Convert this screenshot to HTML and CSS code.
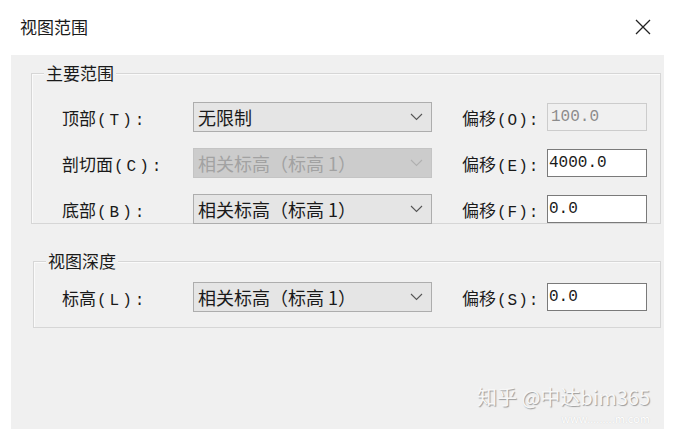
FILE: index.html
```html
<!DOCTYPE html>
<html lang="zh">
  <head>
    <meta charset="utf-8" />
    <meta name="viewport" content="width=device-width, initial-scale=1.0" />
    <title>视图范围</title>
    <link rel="stylesheet" href="styles.css">
  </head>

  <body>
    <header class="titlebar">
      <h1>视图范围</h1>
      <svg class="close" width="16" height="16" viewBox="0 0 16 16">
        <path d="M1 1 L15 15 M15 1 L1 15" stroke="#222" stroke-width="1.3" fill="none" />
      </svg>
    </header>

    <main class="panel">
      <section class="group main-range">
        <span class="legend">主要范围</span>
        <div class="rows">
          <label class="lbl">顶部<span class="lat">(T):</span></label>
          <div class="select">无限制<svg class="chev" width="13" height="8" viewBox="0 0 13 8"><polyline points="1,1 6.5,6.5 12,1" /></svg></div>
          <label class="lbl offset">偏移<span class="lat">(O):</span></label>
          <div class="input off">100.0</div>

          <label class="lbl">剖切面<span class="lat">(C):</span></label>
          <div class="select off">相关标高（标高 1）<svg class="chev" width="13" height="8" viewBox="0 0 13 8"><polyline points="1,1 6.5,6.5 12,1" /></svg></div>
          <label class="lbl offset">偏移<span class="lat">(E):</span></label>
          <div class="input">4000.0</div>

          <label class="lbl">底部<span class="lat">(B):</span></label>
          <div class="select">相关标高（标高 1）<svg class="chev" width="13" height="8" viewBox="0 0 13 8"><polyline points="1,1 6.5,6.5 12,1" /></svg></div>
          <label class="lbl offset">偏移<span class="lat">(F):</span></label>
          <div class="input">0.0</div>
        </div>
      </section>

      <section class="group depth">
        <span class="legend">视图深度</span>
        <div class="rows">
          <label class="lbl">标高<span class="lat">(L):</span></label>
          <div class="select">相关标高（标高 1）<svg class="chev" width="13" height="8" viewBox="0 0 13 8"><polyline points="1,1 6.5,6.5 12,1" /></svg></div>
          <label class="lbl offset">偏移<span class="lat">(S):</span></label>
          <div class="input">0.0</div>
        </div>
      </section>

      <div class="watermark">
        <span class="wm-main">知乎 @中达bim365</span>
        <span class="wm-sub">www.........m.com</span>
      </div>
    </main>
  </body>
</html>
```

FILE: styles.css
```css
body {
  margin: 0;
  background: #fff;
  font-family: "Noto Sans CJK SC", "Noto Sans", sans-serif;
  color: #1a1a1a;
}

.titlebar {
  height: 55px;
  display: flex;
  align-items: center;
  justify-content: space-between;
  padding: 0 32px 0 20px;
}

.titlebar h1 {
  margin: 0;
  font-size: 17px;
  font-weight: normal;
  margin-top: -2px;
}

.close {
  margin-top: -2px;
}

.panel {
  position: relative;
  margin: 0 19px 0 11px;
  height: 374px;
  background: #f0f0f0;
  padding: 18px 3px 0 20px;
  box-sizing: border-box;
}

.group {
  position: relative;
  border: 1px solid #d6d6d6;
  box-shadow: inset 1px 1px #fafafa;
}

.legend {
  position: absolute;
  top: -13px;
  left: 12px;
  padding: 0 2px;
  background: #f0f0f0;
  font-size: 17px;
  line-height: 24px;
}

.main-range {
  height: 151px;
  padding: 28px 0 0 30px;
  box-sizing: border-box;
}

.depth {
  margin: 37px 0 0 2px;
  height: 67px;
  padding: 20px 0 0 28px;
  box-sizing: border-box;
}

.rows {
  display: grid;
  grid-template-columns: 131px 239px 115px 100px;
  grid-auto-rows: 30px;
  row-gap: 16px;
  align-items: center;
}

.lbl {
  font-size: 17px;
  white-space: nowrap;
}

.lat {
  font-family: "Liberation Mono", monospace;
  font-size: 16px;
  letter-spacing: 3px;
  margin-left: 1px;
}

.lbl.offset {
  padding-left: 30px;
}

.lbl.offset .lat {
  letter-spacing: 1px;
}

.select {
  height: 30px;
  box-sizing: border-box;
  border: 1px solid #adadad;
  background: #e5e5e5;
  font-size: 18px;
  line-height: 28px;
  padding-left: 4px;
  display: flex;
  align-items: center;
  justify-content: space-between;
  white-space: nowrap;
}

.select.off {
  background: #cccccc;
  border-color: #c4c4c4;
  color: #a2a2a2;
}

.chev {
  margin-right: 8px;
  fill: none;
  stroke: #555;
  stroke-width: 1.1;
}

.select.off .chev {
  stroke: #b0b0b0;
}

.input {
  height: 28px;
  box-sizing: border-box;
  border: 1px solid #7a7a7a;
  background: #fff;
  font-family: "Liberation Mono", monospace;
  font-size: 16px;
  line-height: 26px;
  padding-left: 1px;
}

.input.off {
  border-color: #cccccc;
  background: #f0f0f0;
  color: #8c8c8c;
  padding-left: 3px;
}

.watermark {
  position: absolute;
  right: 14px;
  bottom: 4px;
  display: flex;
  flex-direction: column;
  align-items: flex-end;
  gap: 2px;
  color: #f7f7f7;
  text-shadow: 1px 1px 1px #9a9a9a;
}

.wm-main {
  font-size: 20px;
  line-height: 24px;
}

.wm-sub {
  font-size: 11px;
  line-height: 14px;
  color: #fff;
  text-shadow: 0 0 1px #c8c8c8;
}
```
